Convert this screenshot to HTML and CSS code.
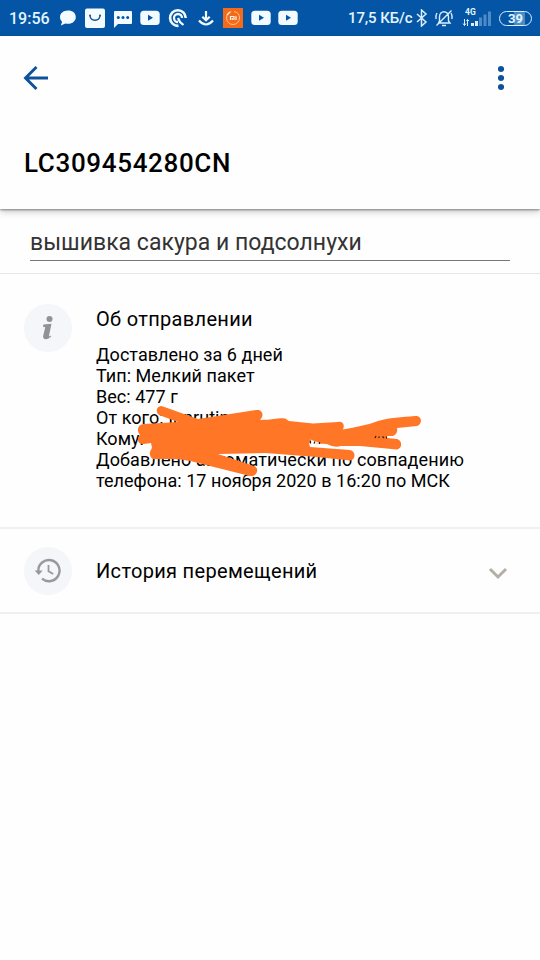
FILE: index.html
```
<!DOCTYPE html>
<html lang="ru">
<head>
<meta charset="utf-8">
<title>LC309454280CN</title>
<link rel="stylesheet" href="styles.css">
</head>
<body>
<div class="status">
  <span class="clock">19:56</span>
  <div class="notes">
    <svg width="20" height="20" viewBox="0 0 20 20"><path fill="#f2fbff" d="M10 2.500C5.300 2.500 2 5.400 2 9c0 2 .8 3.600 2.100 4.700L2.800 17.500l4.600-2c.8.200 1.700.3 2.600.3 4.700 0 7.800-3 7.800-6.800S14.700 2.500 10 2.500z"/></svg>
    <svg width="20" height="20" viewBox="0 0 20 20"><rect y=".5" width="20" height="19.500" rx="2" fill="#f2fbff"/><path d="M5 7.500c.5 6.300 9.500 6.300 10 0" fill="none" stroke="#174f91" stroke-width="1.300"/><circle cx="5" cy="7.500" r="1" fill="#174f91"/><circle cx="15" cy="7.500" r="1" fill="#174f91"/></svg>
    <svg width="20" height="20" viewBox="0 0 20 20"><path fill="#f2fbff" d="M2 3h16q1 0 1 1v11q0 1-1 1H5l-4 4V4q0-1 1-1z"/><g fill="#0455a5"><circle cx="5.300" cy="9.500" r="1.500"/><circle cx="10" cy="9.500" r="1.500"/><circle cx="14.700" cy="9.500" r="1.500"/></g></svg>
    <svg width="20" height="20" viewBox="0 0 20 20"><rect x=".3" y="2.800" width="19.400" height="14.200" rx="3.500" fill="#f2fbff"/><path d="M8 6.800v6l5-3z" fill="#0455a5"/></svg>
    <svg width="20" height="20" viewBox="0 0 20 20" fill="none" stroke="#f2fbff"><path d="M17.700 10A7.800 7.800 0 1 0 10.500 17.800" stroke-width="2.600"/><path d="M14 10A4 4 0 1 0 10 14" stroke-width="2.300"/><path d="m10 10 2 4 3.500 3" stroke-width="2.300"/></svg>
    <svg width="20" height="20" viewBox="0 0 20 20" fill="none" stroke="#f2fbff" stroke-width="2.200"><path d="M10 3v9M6.300 8.700 10 12.200l3.700-3.500M3 12.500q7 8 14 0"/></svg>
    <svg width="20" height="20" viewBox="0 0 20 20"><path fill="#f36b19" d="M0 0h20v20H0z"/><circle cx="10" cy="10" r="6.500" fill="none" stroke="#ffc49a" stroke-dasharray="28 3"/><path d="M7.500 12V8.500H11V12M9.300 10v2M13 8.300V12M4 7l3-3" fill="none" stroke="#fff3e8" stroke-width="1.200"/></svg>
    <svg width="20" height="20" viewBox="0 0 20 20"><rect x=".3" y="2.800" width="19.400" height="14.200" rx="3.500" fill="#f2fbff"/><path d="M8 6.800v6l5-3z" fill="#0455a5"/></svg>
    <svg width="20" height="20" viewBox="0 0 20 20"><rect x=".3" y="2.800" width="19.400" height="14.200" rx="3.500" fill="#f2fbff"/><path d="M8 6.800v6l5-3z" fill="#0455a5"/></svg>
  </div>
  <span class="speed">17,5 КБ/с</span>
  <svg class="bt" width="12" height="18" viewBox="0 0 12 18"><path d="m1 5 9 8-4.500 4V1L10 5l-9 8" fill="none" stroke="#d9efff" stroke-width="1.500"/></svg>
  <svg class="bell" width="18" height="18" viewBox="0 0 18 18" fill="none" stroke="#d9efff" stroke-width="1.400"><path d="M3.500 14h11.500l-1.500-2V8c0-7-9-7-9 0v4zM7 16.500h4M1.500 16.500 16.500 1.500M1.200 10q-.8-3 .8-6M16.800 10q.8-3-.8-6"/></svg>
  <div class="signal">
    <span class="net">4G</span>
    <svg width="30" height="18" viewBox="0 0 30 18"><path fill="#d9efff" d="M9 14h3v3H9zM13 12h3v5h-3z"/><path fill="#4c8bc5" d="M17 8.500h3V17h-3zM21.500 5.500h3V17h-3zM26 2.500h3V17h-3z"/><path d="M2.500 10v6.500M1 14.500l1.500 2 1.500-2M5.500 17v-6.500M4.500 12l1-1.500 1.500 1.500" fill="none" stroke="#d9efff"/></svg>
  </div>
  <div class="battery">39</div>
</div>

<header class="head">
  <div class="tools">
    <svg width="26" height="26" viewBox="0 0 26 26"><path d="M25 13H2.500M13.500 2l-11 11 11 11" fill="none" stroke="#0d529a" stroke-width="2.900"/></svg>
    <svg width="6" height="26" viewBox="0 0 6 26" fill="#0d529a"><circle cx="3" cy="4" r="3.100"/><circle cx="3" cy="13" r="3.100"/><circle cx="3" cy="22" r="3.100"/></svg>
  </div>
  <h1 class="code">LC309454280CN</h1>
</header>

<div class="name"><div class="field">вышивка сакура и подсолнухи</div></div>

<section class="about">
  <div class="disc"><svg width="48" height="48" viewBox="0 0 48 48"><circle cx="25.500" cy="15" r="3" fill="#929294"/><path fill="#929294" d="m19.500 20.500 8-.7L25 31.800c-.2 1 .9.600 1.900-.3l.5.800c-4 4.300-9.200 3.600-8.200-.5l2-8.600-2.300-.5z"/></svg></div>
  <div class="info">
    <h2 class="title">Об отправлении</h2>
    <div class="details">
      <div class="line">Доставлено за 6 дней</div>
      <div class="line">Тип: Мелкий пакет</div>
      <div class="line">Вес: 477 г</div>
      <div class="line">От кого: Innrutina</div>
      <div class="line">Кому:</div>
      <div class="line wide">Добавлено автоматически по совпадению</div>
      <div class="line">телефона: 17 ноября 2020 в 16:20 по МСК</div>
      <svg class="scribble" width="300" height="80" viewBox="130 400 300 80">
        <path fill="#ff7627" d="M163 406.500C158 404 154 411 159 415L178 422L144 424C138 424 136 431 140 435C136 439 138 445 144 444L151 443L152 448C149 452 149 457 153 459L169 459C182 459 192 461 202 464L250 476C257 477 260 468 254 466L218 454L265 453L317 457L350 460.500C356 460 356 451 350 450L310 447L309 443L327 444Q334 448 341 446L360 446L397 449.500C403 448 402 440 397 439L387 438V436L393 436C396 435 398 432 397 428L417 426C423 424 422 415 415 416C403 417 388 418 378 421C368 425 356 427 343 429.500C345 425 343 421 338 422L313 423.500L289 421L286 419C283 417 273 420 260 420C265 415 262 409 256 410L198 419Z"/>
        <path fill="#fefefe" d="m310 439.500 10 3.500-10 1z"/>
        <path d="M310.500 443.500v-3M314 443.500l1-2M319.500 444v-2M375 438l1-2M379 436.500v1.500M382.500 436.500l1.500 1.500M386.500 438.500v-2" fill="none" stroke="#321a0e" stroke-width="1.200"/>
      </svg>
    </div>
  </div>
</section>

<section class="history">
  <div class="disc"><svg width="48" height="48" viewBox="0 0 48 48" fill="none" stroke="#99999b" stroke-width="2.400"><path d="M14.300 24A10.600 10.600 0 1 1 18 31.700"/><path d="M24.500 18v6.200l4.700 2.900" stroke-width="1.800"/><path d="M10.700 23.500h8l-4 4.500z" fill="#99999b" stroke="none"/></svg></div>
  <h2 class="title">История перемещений</h2>
  <svg class="chev" width="20" height="14" viewBox="0 0 20 14"><path d="m2 2 8 8 8-8" fill="none" stroke="#b4afa6" stroke-width="3"/></svg>
</section>
</body>
</html>
```

FILE: styles.css
```
* { box-sizing: border-box; }
body {
  margin: 0;
  width: 540px;
  height: 960px;
  overflow: hidden;
  background: #fefefe;
  color: #000;
  font-family: Roboto, "Noto Sans", sans-serif;
}
svg { display: block; flex: none; }
.status {
  display: flex;
  align-items: center;
  height: 36px;
  padding-left: 9px;
  background: #0455a5;
  color: #e3f5ff;
  white-space: nowrap;
}
.clock { width: 45px; font-size: 16px; font-weight: 500; }
.notes { display: flex; width: 248px; justify-content: space-around; }
.speed { width: 68px; margin-left: 46px; font-size: 15px; font-weight: 500; letter-spacing: -.1px; }
.bell { margin-left: 7px; }
.signal { position: relative; margin-left: 9px; }
.net { position: absolute; left: 3px; top: -1px; font-size: 8.500px; font-weight: 700; line-height: 9px; }
.battery {
  width: 33px;
  height: 15px;
  margin-left: 7px;
  border: 1.500px solid #d9efff;
  border-radius: 8px;
  background: linear-gradient(90deg, #0455a5 45%, #4c8bc5 45% 82%, #0455a5 82%);
  font-size: 13px;
  font-weight: 700;
  line-height: 13px;
  text-align: center;
}
.head {
  position: relative;
  height: 173px;
  padding: 29px 36px 0 23px;
  background: #fefefe;
  box-shadow: 0 1px 2px #0006, 0 3px 7px #0003;
}
.tools { display: flex; justify-content: space-between; }
.code { margin: 56px 0 0 1px; font-size: 26px; font-weight: 500; letter-spacing: .65px; line-height: 32px; }
.name { height: 65px; padding: 14px 30px 0; border-bottom: 1px solid #e5e5e5; }
.field {
  height: 38px;
  border-bottom: 1.500px solid #777;
  color: #333;
  font-size: 23px;
  letter-spacing: .02px;
  line-height: 40px;
}
.about { display: flex; height: 255px; padding: 30px 24px 0; border-bottom: 2px solid #f0f0f0; }
.disc { flex: none; width: 48px; height: 48px; border-radius: 50%; background: #f5f6fa; }
.info { margin-left: 24px; }
.title { margin: 0; font-size: 20px; font-weight: 400; letter-spacing: .32px; line-height: 30px; }
.details { position: relative; margin-top: 10px; font-size: 18px; letter-spacing: .04px; line-height: 21px; }
.line { width: max-content; white-space: nowrap; }
.wide { letter-spacing: .11px; }
.scribble { position: absolute; left: 34px; top: 56px; }
.history {
  display: flex;
  align-items: center;
  height: 85px;
  padding: 0 32px 0 24px;
  border-bottom: 2px solid #f0f0f0;
}
.history .title { flex: 1; margin-left: 24px; }
.chev { margin-top: 6px; }
```
